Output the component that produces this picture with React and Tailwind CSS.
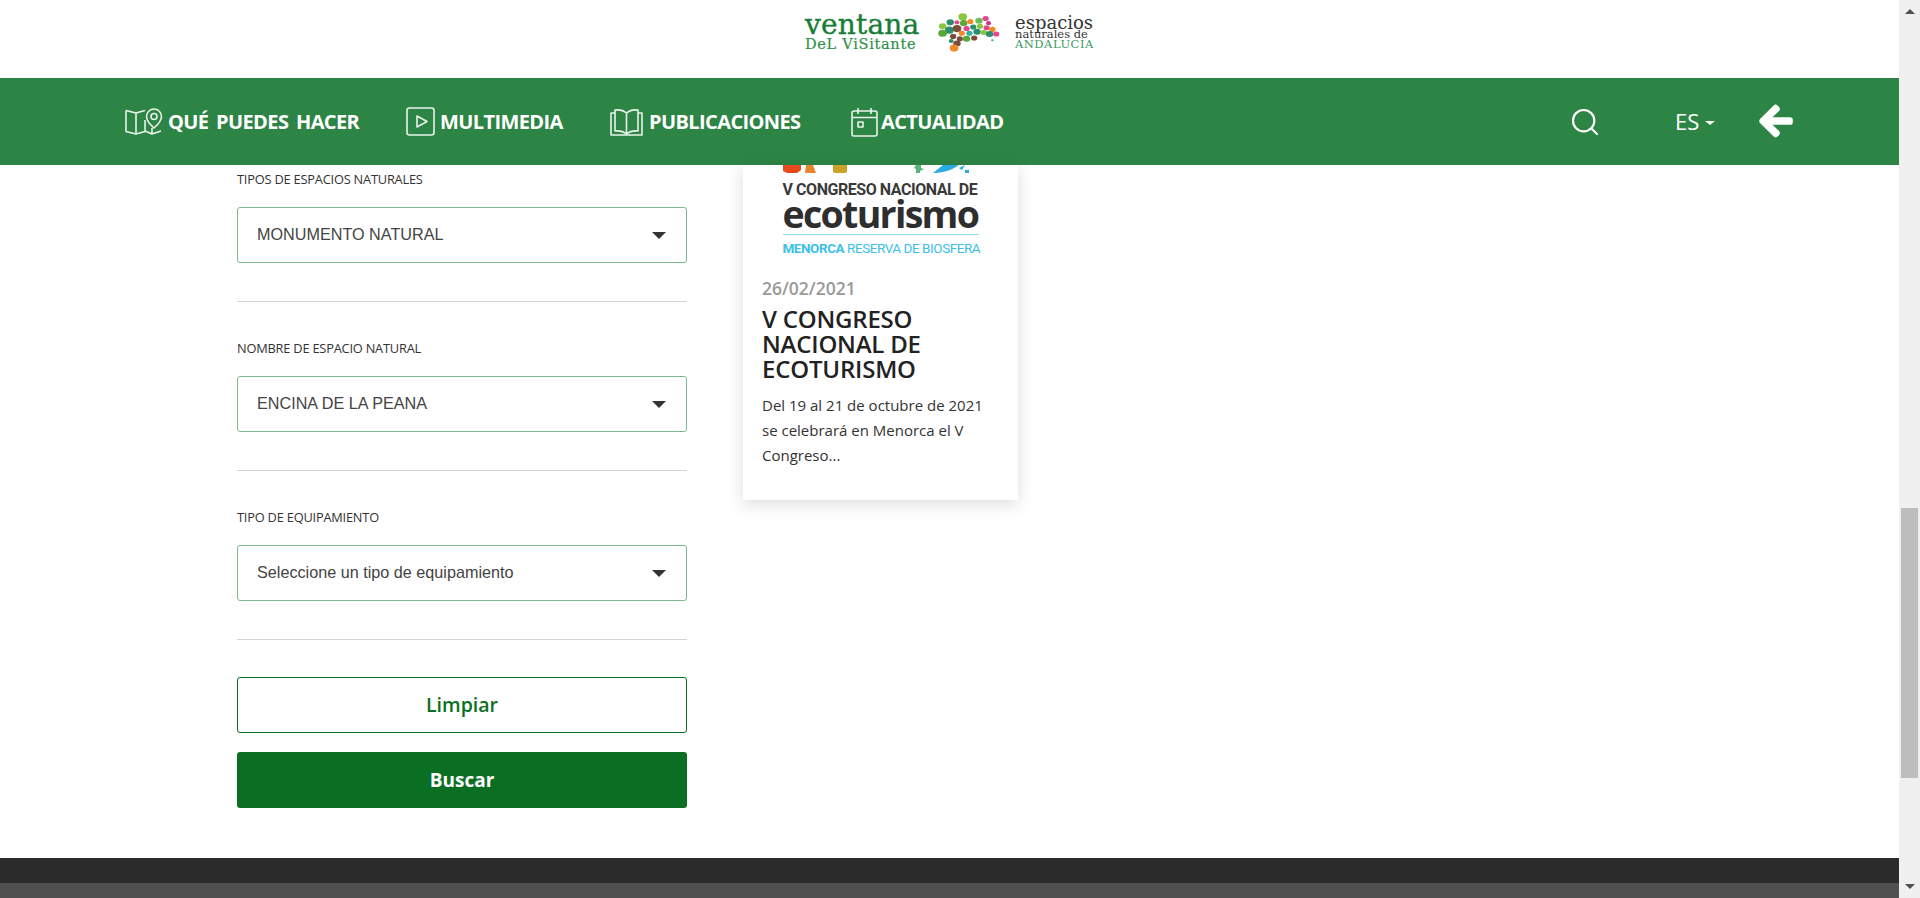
import { Search } from 'lucide-react'
import { FaArrowLeft } from 'react-icons/fa'

const sans = { fontFamily: '"Open Sans", sans-serif' }

const MapIcon = () => (
  <svg width="38" height="28" viewBox="0 0 38 28" fill="none" stroke="currentColor" strokeWidth="1.6" strokeLinejoin="round" className="opacity-90">
    <path d="M1 2.5 L11 5 L20 2.5 M11 5 V26 L1 23.5 V2.5 M11 26 L20 23.5 V12 M20 23 L27 26 L36 23 M27 20 V26" />
    <path d="M29 1 a7.5 7.5 0 0 1 7.5 7.5 c0 5 -7.5 11.5 -7.5 11.5 s-7.5 -6.5 -7.5 -11.5 A7.5 7.5 0 0 1 29 1 Z" />
    <circle cx="29" cy="8.5" r="3" />
  </svg>
)

const PlayIcon = () => (
  <svg width="29" height="29" viewBox="0 0 29 29" fill="none" stroke="currentColor" strokeWidth="1.6" strokeLinejoin="round" className="opacity-90">
    <rect x="1" y="1" width="27" height="27" rx="2.5" />
    <path d="M11 9 L21 14.5 L11 20 Z" />
  </svg>
)

const BookIcon = () => (
  <svg width="33" height="28" viewBox="0 0 33 28" fill="none" stroke="currentColor" strokeWidth="1.6" strokeLinejoin="round" className="opacity-90">
    <path d="M16.5 5 C13 2 9 1.5 5 2 V23 C9 22.5 13 23 16.5 26 C20 23 24 22.5 28 23 V2 C24 1.5 20 2 16.5 5 Z M16.5 5 V26" />
    <path d="M5 5 H1 V27 H32 V5 H28" />
  </svg>
)

const CalendarIcon = () => (
  <svg width="27" height="30" viewBox="0 0 27 30" fill="none" stroke="currentColor" strokeWidth="1.6" strokeLinejoin="round" className="opacity-90">
    <rect x="1" y="4" width="25" height="25" rx="2" />
    <path d="M1 10.5 H26 M7 1 V7 M20 1 V7" />
    <rect x="7" y="15" width="5" height="5" />
  </svg>
)

function NavItem({ icon, label, gap, width }) {
  return (
    <a className={`flex items-center text-white ${gap} ${width}`}>
      {icon}
      <span className="text-[20px] font-bold tracking-[-0.6px] [word-spacing:3px] whitespace-nowrap">{label}</span>
    </a>
  )
}

// the little map of Andalucia made of coloured blobs
const blobs = [
  [30, 5, 3.5, '#8cc63f'], [17, 12, 3, '#2a8f6a'], [24, 12, 2, '#e6468c'], [31, 13, 3, '#5aa83c'], [38, 11, 2.5, '#f08a24'],
  [47, 10, 3, '#6bbf59'], [54, 7, 2.5, '#e6468c'], [57, 13, 2, '#c2388a'], [9, 17, 3, '#8cc63f'], [16, 22, 3.5, '#2a8f6a'],
  [9, 26, 3.5, '#5aa83c'], [24, 20, 3.5, '#7a4b3a'], [34, 20, 2.5, '#e6468c'], [41, 18, 2.5, '#2a8f6a'], [48, 17, 2.5, '#8cc63f'],
  [55, 19, 2.5, '#e6468c'], [61, 21, 2.5, '#f08a24'], [29, 26, 2.5, '#f08a24'], [37, 26, 2.5, '#35b09a'], [45, 24, 3, '#2a8f6a'],
  [52, 25, 2.5, '#8cc63f'], [58, 27, 3, '#2a8f6a'], [65, 27, 2.5, '#e6468c'], [20, 30, 2.5, '#7a4b3a'], [27, 33, 2.5, '#7a4b3a'],
  [34, 33, 3, '#5aa83c'], [42, 32, 2.5, '#7a4b3a'], [18, 36, 2, '#2a8f6a'], [24, 39, 3, '#7a4b3a'], [21, 45, 3.5, '#f08a24'],
  [61, 35, 1, '#35b09a'],
]

const Logo = () => (
  <div className="h-[78px] flex items-center justify-center">
    <div className="flex items-center pb-[14px]">
      <div className="w-[119px]" style={{ fontFamily: '"DejaVu Serif", serif' }}>
        <div className="text-[28px] leading-[24px] tracking-[0.2px] text-[#177e37] whitespace-nowrap [-webkit-text-stroke:0.4px_#177e37]">ventana</div>
        <div className="text-[14.5px] leading-[14px] tracking-[0.7px] text-[#2d9148] whitespace-nowrap [-webkit-text-stroke:0.2px_#2d9148]">DeL ViSitante</div>
      </div>
      <svg width="67" height="39" viewBox="0 0 70 50" preserveAspectRatio="none" className="ml-[10px] mr-[14px]">
        {blobs.map(([cx, cy, r, fill], i) => (
          <circle key={i} cx={cx} cy={cy} r={r * 1.3} fill={fill} />
        ))}
      </svg>
      <div className="w-[79px] text-[#333]" style={{ fontFamily: '"DejaVu Serif", serif' }}>
        <div className="text-[18px] leading-[13px] whitespace-nowrap">espacios</div>
        <div className="text-[11.5px] leading-[10px] whitespace-nowrap">naturales de</div>
        <div className="text-[11.5px] leading-[10px] tracking-[0.5px] text-[#3b9a63] whitespace-nowrap">ANDALUCÍA</div>
      </div>
    </div>
  </div>
)

function Field({ label, value, labelClass, spacing }) {
  return (
    <div className={`border-b border-[#d4d4d4] pb-[38px] ${spacing}`}>
      <label className={`block text-[12.8px] leading-[16px] text-[#333] uppercase tracking-[-0.2px] ${labelClass}`} style={sans}>{label}</label>
      <div className="h-[56px] rounded-[3px] border border-[#7db88e] flex items-center justify-between pl-[19px] pr-[20px] bg-white">
        <span className="text-[#444] text-[16.2px] pb-[2px]" style={{ fontFamily: '"Liberation Sans", sans-serif' }}>{value}</span>
        <span className="w-0 h-0 border-x-[7px] border-x-transparent border-t-[7px] border-t-[#333]" />
      </div>
    </div>
  )
}

export default function App() {
  return (
    <div className="h-[898px] overflow-hidden flex bg-white" style={sans}>
      <div className="w-[1899px] flex flex-col">
        <Logo />

        {/* main nav */}
        <nav className="h-[87px] bg-[#2d8545] flex items-center text-white pl-[125px]">
          <NavItem icon={<MapIcon />} label="QUÉ PUEDES HACER" gap="gap-[5px]" width="w-[281px]" />
          <NavItem icon={<PlayIcon />} label="MULTIMEDIA" gap="gap-[5px]" width="w-[204px]" />
          <NavItem icon={<BookIcon />} label="PUBLICACIONES" gap="gap-[6px]" width="w-[241px]" />
          <NavItem icon={<CalendarIcon />} label="ACTUALIDAD" gap="gap-[3px]" width="w-[718px]" />
          <Search size={32} strokeWidth={1.6} />
          <span className="ml-[74px] text-[22px] flex items-center">
            ES
            <span className="ml-[6px] mt-[3px] w-0 h-0 border-x-[5px] border-x-transparent border-t-[4px] border-t-white" />
          </span>
          <FaArrowLeft size={36} stroke="currentColor" strokeWidth={30} strokeLinejoin="round" className="ml-[43px] -mt-[2px]" />
        </nav>

        <main className="flex-1 flex pl-[237px]">
          {/* search form */}
          <form className="w-[450px] pt-[6px]">
            <Field label="Tipos de espacios naturales" value="MONUMENTO NATURAL" labelClass="mb-[20px]" spacing="mb-[38px]" />
            <Field label="Nombre de espacio natural" value="ENCINA DE LA PEANA" labelClass="mb-[20px]" spacing="mb-[38px]" />
            <Field label="Tipo de equipamiento" value="Seleccione un tipo de equipamiento" labelClass="mb-[20px]" spacing="mb-[37px]" />
            <button type="button" className="w-full h-[56px] rounded-[3px] border border-[#0a6f22] text-[#0a6f22] text-[19.5px] font-semibold bg-white">Limpiar</button>
            <button type="button" className="w-full h-[56px] mt-[19px] rounded-[3px] bg-[#0a6f22] text-white text-[19px] font-bold">Buscar</button>
          </form>

          {/* news card */}
          <article className="w-[275px] h-[335px] ml-[56px] bg-white shadow-[0_4px_16px_rgba(0,0,0,0.14)]">
            <div className="h-[105px] flex flex-col items-center overflow-hidden">
              <svg width="196" height="11" viewBox="0 0 196 11" className="shrink-0">
                <path d="M0 0 H18 V5 L14 8 H4 L0 6 Z" fill="#e8491f" />
                <path d="M23 0 H30 L33 8 H22 Z" fill="#e8842a" />
                <path d="M50 0 H64 V7 L62 8 H52 L50 7 Z" fill="#c9a227" />
                <path d="M133 0 H138 V3 L141 4 L137 6 V8 H133 V4 L131 3 Z" fill="#58b37c" />
                <path d="M150 8 C158 8 168 6 176 0 H160 Z" fill="#29abe2" />
                <path d="M176 3 L182 0 L179 5 Z M182 5 H186 V8 H182 Z" fill="#29abe2" />
              </svg>
              <div className="w-[196px] text-[#3a3a3a] mt-[4px] text-[16px] leading-[20px] font-bold whitespace-nowrap tracking-[-0.45px]" style={{ fontFamily: '"Roboto", sans-serif' }}>V CONGRESO NACIONAL DE</div>
              <div className="w-[196px] text-[#2e2e2e] text-[37.5px] leading-[27px] font-bold whitespace-nowrap tracking-[-1.7px]">ecoturismo</div>
              <div className="w-[196px] h-[1px] bg-[#8fdcf2] mt-[7px]" />
              <div className="w-[196px] text-[#3dbfe8] mt-[3px] text-[13.5px] leading-[20px] whitespace-nowrap tracking-[-0.45px]" style={{ fontFamily: '"Roboto", sans-serif' }}>
                <span className="font-bold">MENORCA</span> RESERVA DE BIOSFERA
              </div>
            </div>
            <div className="px-[19px] pt-[7px]">
              <div className="text-[17.5px] leading-[22px] font-semibold text-[#999]">26/02/2021</div>
              <h3 className="text-[24px] leading-[25px] font-semibold text-[#222] mt-[7px] tracking-[-0.2px]">V CONGRESO NACIONAL DE ECOTURISMO</h3>
              <p className="text-[15px] leading-[25px] text-[#333] mt-[12px]">Del 19 al 21 de octubre de 2021 se celebrará en Menorca el V Congreso...</p>
            </div>
          </article>
        </main>

        {/* footer */}
        <div className="h-[25px] bg-[#2b2b2b]" />
        <div className="h-[15px] bg-[#505050]" />
      </div>

      {/* browser scrollbar */}
      <div className="w-[21px] bg-[#f0f0f0] flex flex-col items-center">
        <span className="mt-[9px] w-0 h-0 border-x-[5px] border-x-transparent border-b-[5px] border-b-[#505050]" />
        <div className="h-[494px] shrink-0" />
        <div className="w-[17px] h-[270px] bg-[#bdbdbd]" />
        <div className="flex-1" />
        <span className="mb-[9px] w-0 h-0 border-x-[5px] border-x-transparent border-t-[5px] border-t-[#505050]" />
      </div>
    </div>
  )
}
